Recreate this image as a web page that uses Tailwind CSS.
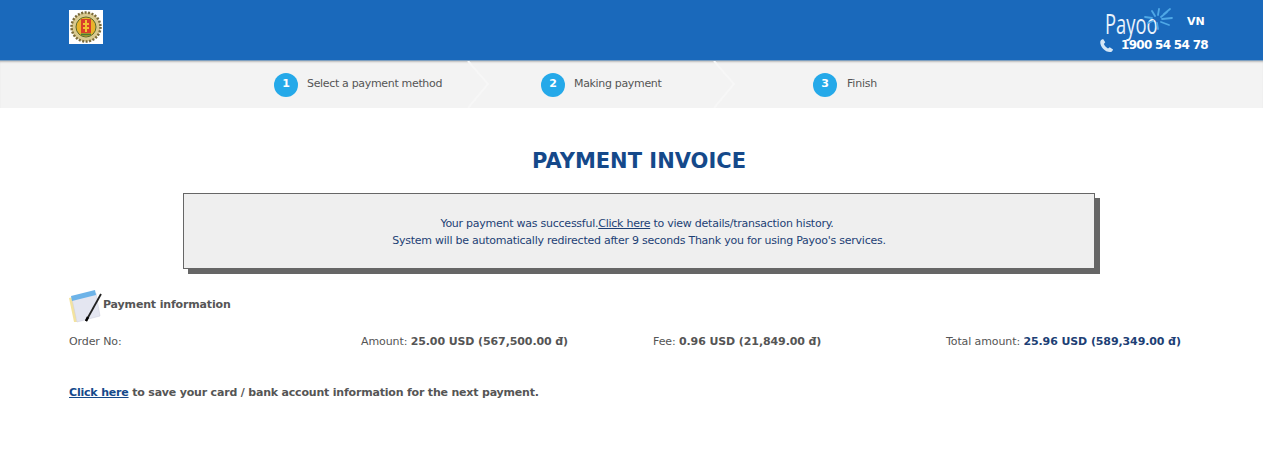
<!DOCTYPE html>
<html lang="en">
  <head>
    <meta charset="UTF-8" />
    <meta name="viewport" content="width=device-width, initial-scale=1.0" />
    <title>Payment Invoice</title>
    <script src="https://cdn.jsdelivr.net/npm/@tailwindcss/browser@4"></script>
  </head>
  <body class="bg-white min-h-screen font-['DejaVu_Sans',sans-serif] text-[11px] text-[#555]">
    <!-- Header -->
    <header class="h-[61px] bg-[#1a69bb] border-b border-[#7d9fc0] flex justify-between pl-[69px] pr-[54px]">
      <svg class="w-[34px] h-[34px] mt-[10px]" viewBox="0 0 34 34">
        <rect width="34" height="34" fill="#fff" />
        <circle cx="17" cy="17" r="14.500" fill="#d9c98f" stroke="#7a6a3a" stroke-width="2.500" stroke-dasharray="2 1.500" />
        <circle cx="17" cy="17" r="10" fill="#e8b32c" stroke="#5c6b2a" stroke-width="1" />
        <rect x="12" y="9" width="10" height="14" fill="#d9402a" />
        <path d="M17 10v12M14 14h6M14 18h6" stroke="#f2c230" stroke-width="2" />
        <path d="M12 24.500h10" stroke="#4a7a35" stroke-width="2" />
      </svg>
      <div class="w-[110px] relative">
        <div class="flex items-start mt-[9px] ml-[6px]">
          <span class="text-[27px] leading-[29px] font-['Open_Sans',sans-serif] text-[#eaf3fb] scale-x-[0.68] origin-left w-[50px]">Payoo</span>
          <span class="text-[11px] leading-[26px] font-bold text-white ml-[32px]">VN</span>
        </div>
        <!-- starburst next to the logo -->
        <svg class="absolute left-[41px] top-[7px] w-[34px] h-[23px]" viewBox="0 0 34 23" fill="none" stroke="#4fa8e6" stroke-width="1.800" stroke-linecap="round">
          <path d="M15 9 12 4M18 8 19 2M21 10 27 5M22 12 32 11M21 15 29 18M17 16 18 22M13 14 8 16M12 11 5 10M24 7 30 2" />
        </svg>
        <div class="flex items-center">
          <svg class="w-[15px] h-[15px] shrink-0 text-[#d5e6f5]" viewBox="0 0 24 24" fill="currentColor">
            <path d="M6.600 1.500 10 6.800 7.800 9.600c1 2.600 3.600 5.600 6.600 7l2.800-2 5.300 3.600c-.6 2.500-2.600 4.300-5 4.300C9.400 22.500 1.700 13.500 2 6.300c.1-2.300 2-4.300 4.600-4.800z" />
          </svg>
          <span class="ml-[7px] text-[12px] leading-[15px] font-bold text-white whitespace-nowrap tracking-[-0.7px]">1900 54 54 78</span>
        </div>
      </div>
    </header>

    <!-- Steps -->
    <nav class="h-[47px] bg-[#f3f3f3] shadow-[inset_0_2px_2px_-1px_#bbb] flex items-center pl-[274px] relative">
      <div class="w-[267px] flex items-center">
        <span class="w-6 h-6 rounded-full bg-[#25a9e9] text-white font-bold text-[11px] flex items-center justify-center">1</span>
        <span class="ml-[9px] -mt-[1px] text-[11px] tracking-[-0.33px] text-[#555]">Select a payment method</span>
      </div>
      <div class="w-[272px] flex items-center">
        <span class="w-6 h-6 rounded-full bg-[#25a9e9] text-white font-bold text-[11px] flex items-center justify-center">2</span>
        <span class="ml-[9px] -mt-[1px] text-[11px] tracking-[-0.33px] text-[#555]">Making payment</span>
      </div>
      <div class="flex items-center">
        <span class="w-6 h-6 rounded-full bg-[#25a9e9] text-white font-bold text-[11px] flex items-center justify-center">3</span>
        <span class="ml-[10px] -mt-[1px] text-[11px] tracking-[-0.2px] text-[#555]">Finish</span>
      </div>
      <svg class="absolute left-[466px] top-0 w-[24px] h-[47px]" viewBox="0 0 24 47" fill="none" stroke="#f7f7f7" stroke-width="2"><path d="M2 0 22 23 2 47" /></svg>
      <svg class="absolute left-[712px] top-0 w-[24px] h-[47px]" viewBox="0 0 24 47" fill="none" stroke="#f7f7f7" stroke-width="2"><path d="M2 0 22 23 2 47" /></svg>
    </nav>

    <main>
      <h1 class="mt-[39px] w-[1278px] text-center text-[21px] leading-[28px] font-bold text-[#15498a]">PAYMENT INVOICE</h1>

      <!-- Result message -->
      <div class="ml-[183px] mt-[18px] w-[912px] h-[76px] bg-[#efefef] border border-[#666] shadow-[5px_5px_0_#666] flex flex-col justify-center text-center text-[11px] leading-[17px] text-[#1d3f75] tracking-[-0.25px] pt-[1px]">
        <p class="pr-[4px]">Your payment was successful.<a href="#" class="underline">Click here</a> to view details/transaction history.</p>
        <p>System will be automatically redirected after 9 seconds Thank you for using Payoo's services.</p>
      </div>

      <section class="px-[69px]">
        <div class="flex items-center mt-[20px] h-[34px]">
          <svg class="w-[35px] h-[35px] -ml-[1px]" viewBox="0 0 35 35">
            <path d="M1 9 5 8 9 33 6 33z" fill="#f3e3a0" />
            <path d="M4 10 28 4l4 23-23 6z" fill="#e4e6f1" stroke="#ccd" stroke-width=".5" />
            <path d="M3 7 27 1l1 5L4 12z" fill="#6db3e8" />
            <path d="M33 5 18 32" stroke="#222" stroke-width="1.800" />
            <path d="M20 28 18 32" stroke="#000" stroke-width="2.500" />
          </svg>
          <h2 class="font-bold text-[11px] -mt-[1px] tracking-[-0.15px] text-[#555]">Payment information</h2>
        </div>

        <div class="grid grid-cols-[292px_292px_293px_1fr] mt-[11px] leading-[16px] tracking-[-0.1px]">
          <div>Order No:</div>
          <div>Amount: <b>25.00 USD (567,500.00 đ)</b></div>
          <div>Fee: <b>0.96 USD (21,849.00 đ)</b></div>
          <div class="whitespace-nowrap">Total amount: <b class="text-[#1d3f75]">25.96 USD (589,349.00 đ)</b></div>
        </div>

        <p class="mt-[35px] font-bold leading-[16px] tracking-[-0.19px]"><a href="#" class="underline text-[#15498a]">Click here</a> to save your card / bank account information for the next payment.</p>
      </section>
    </main>
  </body>
</html>
